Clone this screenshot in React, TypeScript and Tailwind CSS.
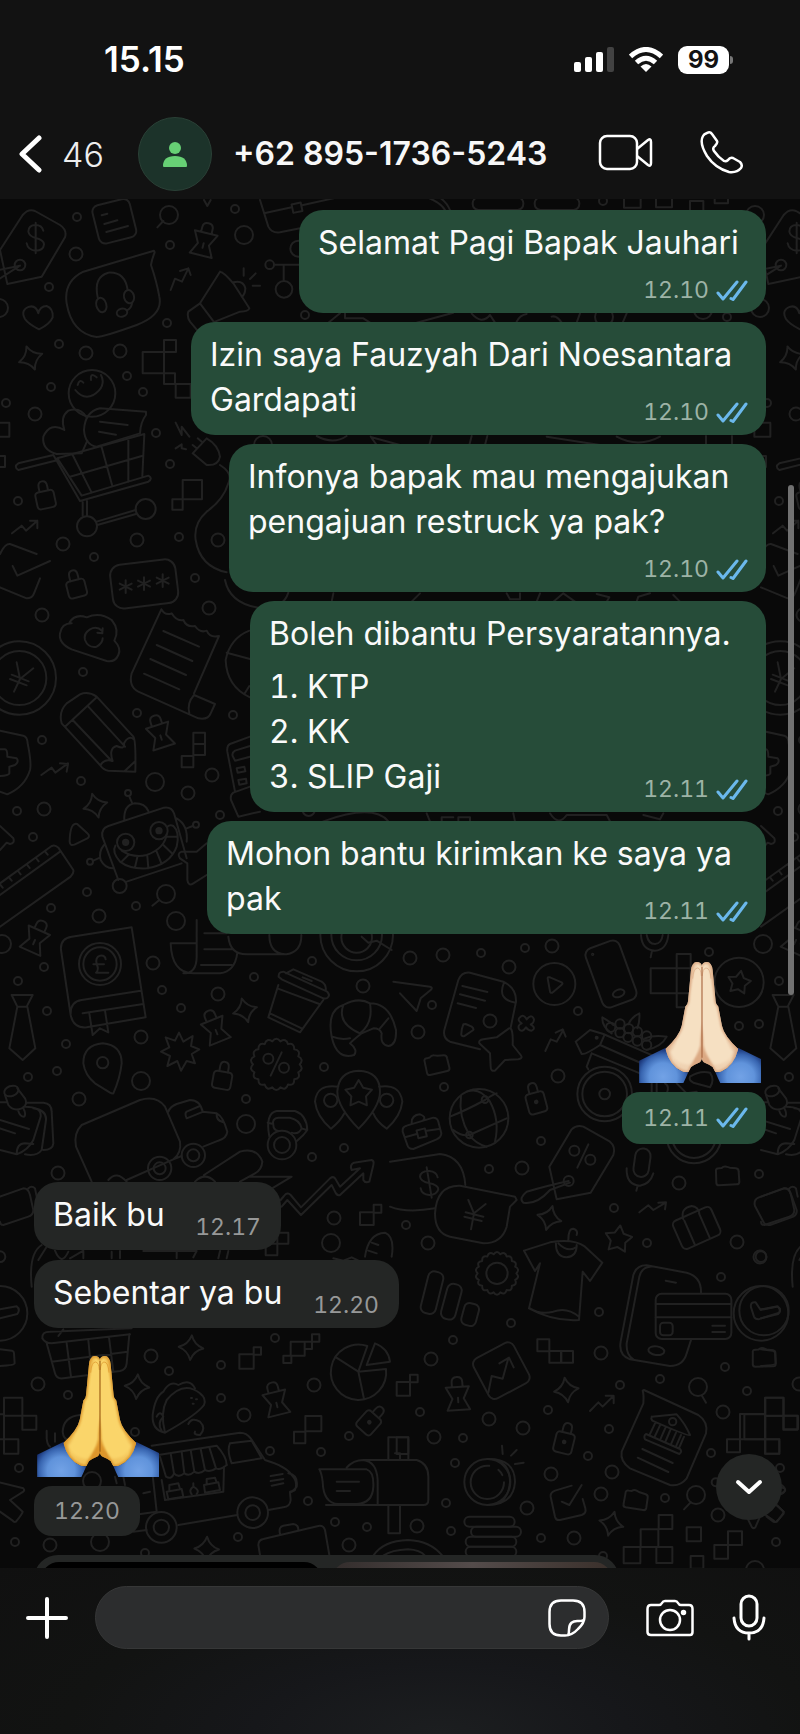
import type { ReactNode } from "react";

type Tone = "out" | "in";

interface BubbleProps {
  tone: Tone;
  time: string;
  width?: string;
  inlineTime?: boolean;
  children: ReactNode;
}

/* ---------- wallpaper ---------- */

const SMALL_DOTS = [
  [77, 217], [49, 287], [59, 344], [51, 387], [127, 376], [143, 392], [6, 403], [156, 433], [170, 464],
  [18, 501], [179, 537], [94, 557], [195, 578], [167, 323], [170, 245], [235, 209], [305, 315], [83, 672],
  [42, 740], [81, 781], [17, 811], [33, 837], [137, 713], [233, 715], [220, 815], [87, 892], [51, 908],
  [136, 906], [44, 967], [312, 961], [254, 977], [18, 981], [162, 990], [181, 1008], [47, 1011], [66, 1044],
  [57, 1071], [28, 1077], [324, 1067], [246, 1099], [312, 1157], [344, 1148], [481, 953], [525, 948],
  [432, 1005], [578, 1011], [444, 1087], [541, 1141], [489, 1169], [406, 1225], [511, 1323], [599, 1312],
  [614, 1208], [647, 1243], [721, 1277], [759, 1174], [709, 952], [739, 1026], [759, 1024], [275, 1338],
  [221, 1365], [169, 1371], [68, 1395], [221, 1398], [135, 1432], [349, 1436], [321, 1452], [270, 1451],
  [308, 1501], [335, 1522], [367, 1527], [238, 1537], [145, 1553], [15, 1542], [19, 1468], [453, 1340],
  [420, 1412], [548, 1410], [463, 1438], [455, 1463], [588, 1456], [609, 1429], [620, 1385], [660, 1379],
  [725, 1367], [747, 1391], [446, 1503], [451, 1531], [541, 1538], [665, 1498], [711, 1453], [603, 1556],
  [603, 201], [727, 317],
];

const MEDIUM_DOTS = [
  [76, 254], [86, 353], [120, 351], [35, 414], [63, 544], [137, 540], [218, 540], [42, 615], [209, 608],
  [188, 793], [212, 775], [44, 809], [99, 916], [153, 963], [218, 994], [141, 1037], [79, 1099], [58, 1173],
  [363, 986], [334, 1218], [410, 958], [443, 955], [509, 967], [552, 946], [418, 1032], [558, 1076],
  [490, 1021], [522, 1168], [428, 1243], [679, 1183], [737, 1242], [760, 1257], [151, 1356], [38, 1384],
  [314, 1385], [244, 1415], [50, 1545], [349, 1545], [431, 1359], [601, 1353], [489, 1419], [523, 1428],
  [434, 1437], [551, 1474], [612, 1472], [601, 1494], [527, 1508], [417, 1526], [574, 1538], [723, 1412],
  [718, 1515],
];

const LARGE_DOTS = [
  [244, 235], [-1, 308], [155, 782], [176, 921], [166, 894], [2, 944], [141, 1081], [246, 1124], [331, 1243],
  [100, 1542], [92, 1481], [169, 215], [755, 215], [263, 445], [755, 1570], [698, 1387], [696, 1495],
  [604, 317], [703, 310],
];

function wavy(cx: number, cy: number, r: number, n: number, depth: number) {
  const pts: string[] = [];
  for (let i = 0; i < n; i++) {
    const a = (i / n) * Math.PI * 2;
    const mid = ((i + 0.5) / n) * Math.PI * 2;
    const end = ((i + 1) / n) * Math.PI * 2;
    if (i === 0) pts.push(`M${cx + r * Math.cos(a)} ${cy + r * Math.sin(a)}`);
    pts.push(
      `Q${cx + (r + depth) * Math.cos(mid)} ${cy + (r + depth) * Math.sin(mid)} ${cx + r * Math.cos(end)} ${cy + r * Math.sin(end)}`
    );
  }
  return pts.join("") + "Z";
}

function star(cx: number, cy: number, r: number, turn = 0) {
  const pts: string[] = [];
  for (let i = 0; i < 10; i++) {
    const a = ((i * 36 - 90 + turn) * Math.PI) / 180;
    const d = i % 2 ? r * 0.55 : r;
    pts.push(`${cx + d * Math.cos(a)} ${cy + d * Math.sin(a)}`);
  }
  return "M" + pts.join("L") + "Z";
}

interface GlyphProps {
  x: number;
  y: number;
  turn?: number;
}

function Pin({ x, y, turn = 0 }: GlyphProps) {
  return (
    <path
      transform={`translate(${x} ${y}) rotate(${turn})`}
      d="M-35 -32H35L17 3L34 37H-34L-17 3ZM-16 -32V-46Q-16 -62 0 -62Q16 -62 16 -46V-32M0 0V14"
    />
  );
}

function Padlock({ x, y, turn = 0, dot = false }: GlyphProps & { dot?: boolean }) {
  return (
    <g transform={`translate(${x} ${y}) rotate(${turn})`}>
      <rect x="-28" y="-22" width="56" height={dot ? 62 : 52} rx="10" />
      <path d="M-13 -22V-36Q-13 -52 0 -52Q13 -52 13 -36V-22" />
      {dot && <circle cy="6" r="4" fill="#212121" />}
    </g>
  );
}

function Sparkle({ x, y, turn = 0 }: GlyphProps) {
  return (
    <path
      transform={`translate(${x} ${y}) rotate(${turn})`}
      d="M0 -37Q9 -9 37 0Q9 9 0 37Q-9 9 -37 0Q-9 -9 0 -37Z"
    />
  );
}

function Folder({ x, y, turn = 0 }: GlyphProps) {
  return (
    <path
      transform={`translate(${x} ${y}) rotate(${turn})`}
      d="M-35 -13Q-37 -23 -27 -23L-18 -24Q-12 -30 -4 -28L6 -25L25 -23Q33 -22 33 -13L35 17Q35 25 27 25L-26 28Q-34 28 -34 20Z"
    />
  );
}

function Asterisk({ x, y }: GlyphProps) {
  return <path transform={`translate(${x} ${y})`} d="M0 -19V19M-18 -9L18 9M-18 9L18 -9" />;
}

function Doodles() {
  return (
    <g id="doodles">
      <g transform="translate(0 -597) scale(3)" strokeWidth="2">
        {SMALL_DOTS.map(([x, y]) => <circle key={`${x}-${y}`} cx={x} cy={y} r="4" />)}
        {MEDIUM_DOTS.map(([x, y]) => <circle key={`${x}-${y}`} cx={x} cy={y} r="6.5" />)}
        {LARGE_DOTS.map(([x, y]) => <circle key={`${x}-${y}`} cx={x} cy={y} r="9" />)}
      </g>

      {/* price tag, headset, shopping cart */}
      <g transform="translate(0 3)">
        <path d="M22 252L0 150L68 45Q85 25 105 33L180 75Q202 90 195 112L125 230ZM-5 210L60 197M0 235L60 197" />
        <circle cx="60" cy="195" r="16" />
        <path d="M130 92Q125 75 107 75Q85 75 85 95Q88 110 107 114Q132 120 132 133Q130 152 107 152Q84 150 80 130M107 68V160" />
        <rect x="285" y="5" width="115" height="118" rx="20" transform="rotate(-14 342 62)" />
        <path d="M305 46L322 41M313 72L352 61M319 96L384 78M490 63L472 82M612 0L622 18L632 0" />
        <Pin x={611} y={130} turn={14} />
        <path d="M462 152Q350 185 250 215Q190 245 200 310Q215 400 290 411Q310 411 410 375Q490 345 478 290Q470 245 453 195Q455 180 464 157Z" />
        <path d="M293 292Q280 230 325 218Q375 215 383 270M396 310Q394 325 380 332" />
        <ellipse cx="304" cy="315" rx="15" ry="22" transform="rotate(-15 304 315)" />
        <ellipse cx="387" cy="290" rx="15" ry="20" transform="rotate(-15 387 290)" />
        <ellipse cx="366" cy="338" rx="16" ry="12" transform="rotate(-15 366 338)" />
        <path d="M115 340Q108 315 88 320Q60 330 75 357Q85 372 117 388Q150 372 158 352Q160 325 140 318Q120 318 115 340" />
        <path d="M512 270L525 236L546 245L565 205M540 213L565 205L572 225" />
        <path d="M660 215L600 310L565 335Q560 350 570 365L595 395M600 310L645 370M660 215Q670 215 700 250L748 325Q745 335 720 335L645 365M700 247Q730 240 736 265Q735 285 725 290M731 205V227M767 220L750 237M758 257H780" />
        <path d="M780 0L805 80Q815 100 840 97L900 85M792 40L875 22M906 16L1000 -5" />
        <rect x="877" y="10" width="28" height="26" transform="rotate(-12 891 23)" />
        <path d="M823 194H900M851 194V240" />
        <circle cx="809" cy="194" r="13" />
        <circle cx="852" cy="268" r="25" />
        <circle cx="895" cy="146" r="24" />
        <Sparkle x={92} y={474} turn={-20} />
        <path d="M428 456H492V420H528V456H492V520H428ZM492 520H525V552H492ZM527 552H572V593H527Z" />
        <circle cx="276" cy="580" r="70" />
        <path d="M226 570Q250 600 280 585Q320 560 303 525M233 555Q238 535 250 548M273 540Q270 515 290 532" />
        <path d="M193 690Q150 665 130 710Q125 750 170 762L245 760L262 722M193 690Q180 650 205 632Q240 620 258 650" />
        <path d="M438 635L300 625Q255 635 252 690Q255 735 290 740L420 700Q422 665 438 645ZM300 665L383 675M297 695L348 704" />
        <path d="M160 765L55 790Q40 800 55 810L165 782M160 765L240 903L445 845Q460 835 445 827L245 887L172 775L433 702L427 828M218 765L275 878M305 742L337 858M385 715V845M210 830L428 767M248 905V947M261 903V947M290 965L407 930M292 975L408 942" />
        <circle cx="261" cy="979" r="30" />
        <circle cx="437" cy="927" r="30" />
        <Padlock x={136} y={895} turn={-12} />
        <Padlock x={229} y={1162} turn={-14} />
        <path d="M578 760L620 715Q655 735 660 770Q655 798 620 795ZM590 745L578 735M607 727L593 715M660 795Q700 820 685 850Q670 900 620 935Q580 970 587 1020Q600 1100 680 1117M527 668L545 705V680L568 710M527 745L545 733V745L558 748" />
        <path d="M548 840H606V898H548ZM517 898H548V929H517Z" />
        <path d="M36 1000L65 977L78 992L112 962M90 962H112V985" />
        <path d="M110 1062L30 1032Q15 1030 0 1062M38 1098L52 1127L150 1083M0 1162L80 1195Q97 1195 102 1180L120 1135" />
        <rect x="334" y="1086" width="197" height="132" rx="32" transform="rotate(-7 432 1152)" />
        <Asterisk x={377} y={1160} />
        <Asterisk x={432} y={1151} />
        <Asterisk x={488} y={1142} />
        <path d="M-20 668H28V710H-20ZM-18 768H15V801H-18Z" />
        <path d="M985 368L1020 340M1035 340V355H1090L1110 368M950 708Q1000 735 1040 708M1112 710L1130 735M1115 712L1200 735" />
      </g>

      {/* slices of drawings that show between the sent bubbles */}
      <g transform="translate(1200 3)">
        <rect x="218" y="-8" width="152" height="38" rx="18" />
        <rect x="404" y="-8" width="134" height="38" rx="18" />
        <path d="M672 -15H722V23H672ZM768 -15H816V22H768ZM870 3H910V40H870ZM944 -25H984V10H944ZM75 -10Q120 5 135 30M115 -10Q140 5 150 30" />
        <path d="M50 368L160 338M215 341Q245 375 270 345L285 368M350 365Q360 345 380 342M455 350Q470 345 485 368M540 340L530 368M680 340L668 368" />
        <path d="M95 708L88 735M215 708L208 735M262 708L255 735M440 710L600 735M650 710Q715 745 780 710M918 708V735M996 708V735" />
      </g>

      {/* cloud, coin, receipt, pencil, robot */}
      <g transform="translate(0 1143)">
        <path d="M208 128Q225 100 260 112Q300 95 335 120Q360 150 343 182Q365 205 355 225Q345 248 320 243L215 208Q175 190 180 160Q185 130 215 130M307 153Q290 137 270 148Q250 160 255 180Q265 205 290 200Q308 190 308 175M308 145L307 160L292 158" />
        <circle cx="58" cy="294" r="110" />
        <circle cx="58" cy="294" r="81" />
        <path d="M50 247L60 297L100 265M60 297L42 335M30 297L80 316M35 284L86 304" />
        <path d="M484 88L395 280Q385 320 415 335L595 415Q625 420 632 400L645 372L582 345Q560 370 568 400M484 88Q495 108 515 100Q530 125 550 120Q560 143 585 138Q600 160 620 152Q630 175 657 168L582 340M490 153L597 200M470 195L577 243M451 237L558 285M432 281L538 328" />
        <path d="M185 430Q175 395 200 370L240 343Q265 333 290 350L400 470Q408 480 406 575L325 572Q310 570 300 555ZM195 440L290 352M218 420L335 543M265 380L375 500M303 553Q315 535 338 543Q325 505 350 498Q375 510 372 490Q385 465 402 478M375 572L404 545" />
        <Pin x={481} y={466} turn={-18} />
        <path d="M580 458H615V525H580ZM580 492H615M545 528H580V562H545Z" />
        <path d="M0 452L70 467Q82 470 83 490Q95 550 90 570Q75 620 22 643L0 635M-20 508H15Q22 508 22 530L50 535Q58 545 45 555L28 560V580Q25 588 -10 588" />
        <path d="M124 585L155 563L166 578L204 550M180 550L204 552L200 575" />
        <Sparkle x={286} y={677} turn={-15} />
        <path d="M355 900L307 770Q303 745 325 738L492 683Q515 680 522 700L560 835M380 905L545 850M373 722Q370 675 405 670Q435 670 445 693M396 668L388 650M312 795Q295 815 302 840Q315 865 338 865M300 833L280 842M530 715Q565 735 560 785M560 745L578 738" />
        <circle cx="359" cy="918" r="21" />
        <circle cx="384" cy="639" r="9" />
        <circle cx="270" cy="845" r="9" />
        <circle cx="588" cy="734" r="9" />
        <circle cx="377" cy="787" r="26" />
        <circle cx="477" cy="752" r="26" />
        <circle cx="377" cy="787" r="8" fill="#212121" />
        <circle cx="477" cy="752" r="8" fill="#212121" />
        <path d="M346 797Q335 815 360 845Q390 868 440 865Q510 855 530 800Q540 755 520 738Q510 733 502 740M365 812Q400 835 440 825Q495 805 500 762M385 825L365 845M412 832L405 862M442 828L445 865M470 815L485 852M490 795L518 822M500 770H532" />
        <path d="M620 790L590 815L545 815Q530 820 540 835L562 850V900Q565 920 580 910L620 885" />
        <path d="M225 732Q210 735 209 785Q210 800 225 793L262 775Q272 768 262 760L235 735Q230 730 225 732" />
        <path d="M0 738L40 775Q45 790 30 792L20 788L0 810" />
        <path d="M0 910L155 798Q165 793 175 803L220 870Q222 880 212 890L0 1040M0 945L180 815M0 913l8 10M27 892l8 10M54 873l8 10M81 854l8 10M108 834l8 10M135 814l8 10" />
        <Pin x={105} y={1080} turn={24} />
        <path d="M478 960L457 977" />
        <path d="M750 470L690 492Q680 497 682 515L705 635M750 620L700 638Q690 645 693 660L715 710L780 695M750 498L705 512Q695 518 698 528L705 542L750 530M710 565L733 560L736 574L713 578ZM715 600L738 596L740 610L718 614Z" />
        <path d="M748 152Q690 175 677 240Q680 320 750 352M680 218L750 237M748 318L733 342M675 0Q690 75 790 85Q850 85 865 38M970 724Q1120 670 1165 724M1000 40L995 65" />
        <circle cx="926" cy="690" r="18" />
        <path d="M1280 700L1290 724M1325 724V712H1360M1375 724V712H1410V724M1540 700L1545 724M1650 700Q1675 740 1700 705H1820L1830 724M1930 705L1980 718L1990 700M1235 65L1260 40M1520 40L1530 58H1560V40M1610 65L1620 40M1660 65L1690 40L1725 65M1790 42L1828 52L1820 65M1910 65L1915 50L1950 40M2020 45L2040 65" />
      </g>

      {/* book, tie, truck, kettlebell, map pins */}
      <g transform="translate(0 2163)">
        <path d="M590 0V110Q590 160 550 160M512 70H586M512 70Q515 160 580 160H660Q705 155 712 98M613 40H680M613 88H700M603 135H695M685 50Q690 103 740 103H860Q905 95 904 45M808 45Q808 100 855 103" />
        <circle cx="1070" cy="45" r="109" />
        <circle cx="1070" cy="45" r="76" />
        <circle cx="1070" cy="52" r="46" />
        <path d="M1085 50L1105 68L1130 62L1175 90" />
        <path d="M395 22L215 50Q180 55 183 90L212 285Q220 325 260 322L437 292ZM212 285Q210 245 245 240L422 212M248 280L430 252M268 280L278 345L300 325L325 337L315 272" />
        <circle cx="300" cy="132" r="63" />
        <circle cx="300" cy="132" r="50" />
        <path d="M317 118Q315 105 300 107Q285 112 290 132Q298 150 288 158H325M280 133H312" />
        <path d="M35 225H98L80 260H52ZM52 260L28 385L68 420L106 385L82 260" />
        <path d="M340 520Q360 475 365 430Q365 375 308 370Q250 375 250 430Q255 465 285 490L330 518Q337 522 340 520" />
        <circle cx="308" cy="428" r="17" />
        <path d="M537 338L550 365L578 348L573 378L598 388L575 402L585 430L560 423L543 452L532 423L502 438L510 408L483 395L508 382L497 352L525 362Z" />
        <Padlock x={667} y={477} turn={10} />
        <Pin x={647} y={330} turn={-22} />
        <Sparkle x={735} y={271} turn={-15} />
        <path d="M850 155Q835 155 836 170L845 178L970 235Q985 238 987 225Q985 215 975 212ZM858 160L880 148L965 185Q980 195 977 212M908 172L935 183M835 195L805 292L900 337L970 240M832 205L958 252M810 280L905 325" />
        <path d={wavy(829, 433, 70, 18, 15)} />
        <circle cx="805" cy="416" r="15" />
        <circle cx="852" cy="443" r="15" />
        <path d="M845 397L812 467" />
        <path d="M995 350Q980 270 1030 255Q1075 230 1110 250Q1170 250 1188 330Q1190 375 1165 378Q1140 375 1145 340Q1140 325 1120 325L1085 340Q1060 360 1050 370Q1075 390 1062 405Q1010 420 995 350M1030 255Q1010 310 1080 340Q1120 310 1110 250M1165 295L1140 325M997 350Q1020 360 1050 355" />
        <path d="M1076 626Q1012 560 1012 515Q1015 455 1076 452Q1140 455 1140 515Q1140 560 1076 626M1015 500Q950 490 945 545Q950 590 993 626Q1020 605 1033 580M1137 500Q1200 490 1207 545Q1202 590 1160 626Q1130 605 1120 580" />
        <path d={star(1076, 522, 42)} />
        <circle cx="992" cy="541" r="20" />
        <circle cx="1160" cy="541" r="20" />
        <path d="M80 548H130Q155 550 155 575L160 670Q158 690 130 690M75 560Q125 560 122 590L100 660Q85 690 50 703L0 690M50 703Q50 670 75 670L100 672M0 600L87 627M0 625L45 640M15 525L25 555Q40 575 65 565Q85 555 75 535L52 505M55 573Q60 590 72 590M70 565Q78 580 74 588M0 547H20M100 565Q140 570 138 600L125 690Q110 710 75 703" />
        <ellipse cx="34" cy="513" rx="22" ry="15" transform="rotate(-20 34 513)" />
        <path d="M275 785L228 680Q220 640 245 615L420 540Q470 525 495 560L540 665Q545 700 520 718L380 780M505 575Q510 560 530 552L570 540Q600 540 608 575L650 580Q670 590 682 635Q680 655 655 662L610 680M600 558L560 575Q553 580 560 595L610 575M650 582Q648 600 668 606M520 718L545 708M325 780Q350 750 380 785" />
        <circle cx="580" cy="706" r="35" />
        <circle cx="580" cy="706" r="18" />
        <circle cx="479" cy="745" r="35" />
        <circle cx="479" cy="745" r="18" />
        <path d="M612 765L720 695Q770 680 787 725Q785 750 765 760L720 785M585 785Q615 755 645 785M750 770H875L800 815" />
        <circle cx="846" cy="675" r="43" />
        <circle cx="846" cy="675" r="24" />
        <path d="M808 650Q795 580 830 573H885Q920 585 922 630L910 645L888 665M820 615Q815 595 835 593H870Q900 600 905 625Q895 645 875 638M820 615Q820 630 835 633M803 608L820 612M905 625L920 630" />
        <path d="M845 860L862 840L903 885L995 795L1005 815Q1010 828 1020 825L1090 760V780Q1095 790 1108 785L1120 735Q1123 722 1115 720L1062 728Q1048 735 1055 750L1080 745L1020 800L1005 775Q1000 768 990 775L903 862L872 825Q862 815 852 828L842 840" />
        <path d="M1080 877H1121V915H1080ZM1121 854H1144V878H1121ZM832 938H865V971H832ZM797 971H832V1006H797Z" />
        <path d="M0 830L70 805Q85 805 90 825L100 870Q100 885 85 890L10 915Q0 915 0 905M85 805Q95 795 105 805L110 830" />
        <path d="M1095 1010Q1105 940 1155 938Q1185 950 1175 1010M1115 968L1135 975M1105 992L1130 1000M1000 1015L1030 1022L1055 1012L1080 1024M95 1100Q85 1000 125 975M115 1020L140 980M165 992Q185 1040 205 995M210 1015L250 992V1015M335 995V1015M360 993V1015M430 993H590L580 1012M530 993V1015M660 993L655 1015M685 993L680 1015" />
        <circle cx="0" cy="1180" r="82" />
        <circle cx="0" cy="1010" r="16" />
        <path d="M0 1168L50 1159Q62 1168 52 1182L0 1195" />
      </g>

      {/* globe, tags, t-shirt, card */}
      <g transform="translate(1200 2193)">
        <path d="M-20 155L90 170Q100 172 92 180L62 205L50 243L0 190" />
        <path d="M240 358L150 335Q128 325 133 300L175 150Q185 125 210 128L310 155Q350 175 348 215L332 293M312 158Q290 210 348 218M187 168L262 186M180 193L255 212M173 220L228 234M190 283Q183 300 184 315Q188 322 195 317L220 300Q222 295 215 290L197 282Z" />
        <path d="M327 295Q340 290 338 345L362 375Q370 385 355 388L315 390L285 422Q272 425 272 410L270 370L238 340Q235 330 250 328L290 322Z" />
        <circle cx="463" cy="162" r="63" />
        <path d="M443 145Q443 140 450 142L485 157Q490 160 485 164L457 188Q450 190 450 184Z" />
        <rect x="579" y="38" width="108" height="188" rx="22" transform="rotate(-20 633 132)" />
        <ellipse cx="656" cy="190" rx="18" ry="11" transform="rotate(-20 656 190)" />
        <circle cx="578" cy="73" r="2" />
        <path d="M723 15Q725 60 765 62Q800 60 805 15M740 15Q745 42 765 42Q785 40 788 15M756 62L752 82" />
        <path d="M752 115H872V190H752ZM830 72H872V232H830Z" />
        <circle cx="1017" cy="157" r="74" />
        <path d={star(1017, 158, 36, 10)} />
        <path d="M360 262Q370 250 380 268Q395 250 402 268Q402 280 392 283Q410 295 395 302Q385 302 378 292Q365 310 357 297Q352 285 365 280Q350 270 360 262" />
        <path d="M436 363L452 328L470 335L490 300M467 308L488 298L497 320" />
        <Folder x={111} y={403} turn={-10} />
        <path d="M635 310Q605 290 607 262Q630 275 640 285M685 283Q695 260 718 250Q720 275 712 295M800 320Q760 315 735 325M800 320Q785 350 740 360" />
        {[[632, 292], [660, 282], [686, 296], [660, 308], [684, 322], [712, 305], [740, 318], [712, 333], [740, 345]].map(
          ([x, y]) => <circle key={`${x}-${y}`} cx={x} cy={y} r="14" />
        )}
        <path d="M527 335L570 300L610 312L800 395M527 335L545 372Q555 375 600 345L612 318M600 345L770 420M575 370L560 410L565 418M575 370L720 430M755 460V490M770 460V490M795 460Q810 470 800 490M830 460L860 490L890 485" />
        <circle cx="590" cy="323" r="3" />
        <circle cx="614" cy="492" r="82" />
        <circle cx="614" cy="492" r="67" />
        <circle cx="614" cy="492" r="16" />
        <Padlock x={407} y={510} turn={-15} dot />
        <circle cx="237" cy="565" r="88" />
        <path d="M183 497Q175 560 208 615Q225 640 260 650M200 485Q240 470 270 515Q300 570 285 635M150 560Q200 540 255 510Q275 495 290 490M160 600Q185 620 208 615L320 565" />
        <circle cx="255" cy="509" r="10" />
        <circle cx="208" cy="615" r="10" />
        <path d="M8 605Q6 590 20 587L100 563Q112 563 115 575L124 610Q124 622 110 628L40 657Q25 657 22 645ZM35 578Q35 555 60 553Q80 560 70 570M15 622L50 612M80 602L117 597" />
        <rect x="52" y="598" width="26" height="24" transform="rotate(-14 65 610)" />
        <path d="M-30 695L120 672Q190 680 196 765M-30 830Q20 850 105 835M113 742Q110 725 88 723Q62 722 60 740Q62 755 87 759Q115 765 115 778Q110 795 88 795Q65 793 62 775M80 712L95 803" />
        <path d="M345 800L180 767Q110 765 105 850Q105 910 150 920L250 940Q305 940 320 890L330 830L350 810ZM205 810L222 850L257 822M222 850L213 898M193 860L245 873M197 847L250 860" />
        <path d="M470 808L448 710L515 598Q530 583 550 590L630 635Q648 650 640 675L572 788ZM565 643L532 713M506 753Q450 765 380 785Q355 805 370 818Q410 825 450 780L510 758" />
        <circle cx="523" cy="662" r="15" />
        <circle cx="571" cy="689" r="15" />
        <circle cx="506" cy="753" r="15" />
        <Sparkle x={448} y={864} turn={15} />
        <rect x="703" y="655" width="46" height="86" rx="23" transform="rotate(8 726 698)" />
        <path d="M680 715Q678 765 720 767Q750 762 760 730M713 767L709 782" />
        <circle cx="882" cy="618" r="82" />
        <circle cx="882" cy="618" r="66" />
        <Folder x={983} y={738} />
        <path d="M870 440Q900 420 930 428Q945 450 930 472L880 458Q865 450 870 440" />
        <rect x="828" y="848" width="125" height="92" rx="14" transform="rotate(-24 890 895)" />
        <path d="M853 872L885 945M897 850L930 925M850 868Q840 835 875 828Q895 830 898 850" />
        <path d={star(655, 928, 42, 8)} />
        <path d="M718 847L745 826L760 840L797 818M775 818L798 817L795 838" />
        <path d="M372 962L450 937Q520 925 555 950L607 998L570 1053L548 1025L537 1170Q460 1175 387 1135L420 1000L405 1023ZM468 935Q465 980 500 982Q530 980 530 945M505 930Q505 895 520 896Q535 900 530 915M475 940Q505 970 530 950M390 1135Q420 1155 460 1145Q500 1130 537 1160" />
        <path d={wavy(291, 1030, 58, 18, 13)} />
        <circle cx="291" cy="1030" r="32" />
        <rect x="73" y="1024" width="46" height="128" rx="18" transform="rotate(14 96 1088)" />
        <rect x="132" y="1061" width="44" height="108" rx="18" transform="rotate(15 154 1115)" />
        <rect x="188" y="1120" width="45" height="67" rx="16" transform="rotate(15 210 1153)" />
        <path d="M903 1090Q905 1040 860 1028L740 1006Q710 1005 700 1035L662 1235Q655 1275 690 1288L810 1308Q850 1308 860 1270L873 1230M750 1010Q725 1012 718 1040L680 1240Q678 1275 700 1288M797 1052L828 1058" />
        <rect x="767" y="1091" width="227" height="136" rx="18" />
        <path d="M767 1122H994M767 1162H994M937 1187H975M937 1206H975" />
        <rect x="780" y="1178" width="38" height="38" rx="10" />
        <ellipse cx="769" cy="1262" rx="24" ry="13" transform="rotate(8 769 1262)" />
        <circle cx="1092" cy="1142" r="74" />
        <path d="M1053 1132Q1050 1115 1067 1117L1082 1140L1130 1130Q1145 1135 1138 1148L1075 1168Q1065 1168 1062 1160Z" />
        <path d="M1065 828Q1060 810 1075 803L1150 775Q1165 773 1170 785L1190 840Q1192 852 1180 860L1110 885Q1095 887 1090 875Z" />
      </g>

      {/* basket, taco, food truck, mailbox */}
      <g transform="translate(0 3303)">
        <path d="M127 115Q125 95 150 95L395 85M127 115Q135 130 155 130L390 103M140 130L165 220Q170 238 190 235L360 213Q378 210 380 190L388 103M200 130L213 230M265 120L275 225M327 112L340 215M155 185L383 155M175 108L190 88" />
        <path d="M0 148L36 152Q42 154 42 160L44 190Q44 196 0 198" />
        <Sparkle x={573} y={143} turn={4} />
        <Sparkle x={411} y={260} turn={4} />
        <Sparkle x={620} y={747} turn={2} />
        <path d="M718 163H761V206H718ZM761 142H783V164H761ZM872 125H914V167H872ZM850 167H874V189H850ZM914 125H936V147H914ZM936 103H958V125H936Z" />
        <path d="M1102 138A83 83 0 1 0 1158 207L1075 215ZM1075 215L1008 172M1075 215L1092 297M1125 130L1100 195L1170 185Q1165 145 1125 130" />
        <Pin x={829} y={308} turn={-14} />
        <path d="M495 398Q480 340 500 300Q550 240 600 280Q620 295 612 315Q590 345 495 398Q455 390 458 345Q465 290 490 275Q510 240 535 255Q570 235 585 265M470 350Q480 330 490 350Q470 370 485 392" />
        <path d="M573 294h3M588 298h3M578 311h3" />
        <path d="M565 372Q575 350 600 365Q620 385 600 405Q580 405 585 395" />
        <path d="M455 437L720 398Q740 398 752 415L795 480Q860 500 875 525Q895 545 885 570L870 578L872 600Q870 620 850 622L805 630M712 645L535 675M440 690L400 695M475 465L650 437Q680 470 680 495M485 540L495 600L670 575L672 500M455 500L470 635M400 645L470 635M812 528L848 522M812 543L850 537M815 557L850 550M865 520Q895 525 890 560Q880 575 870 575" />
        <path d="M480 470L498 530Q515 540 522 520L512 460M522 520Q535 535 553 520L545 455M553 520Q568 530 583 515L572 450M583 515Q598 525 615 510L602 447M615 510Q630 518 648 505L628 442M648 505Q660 512 680 495" />
        <path d="M690 430L755 422L785 475L695 490Q680 450 690 430M500 575L545 567L550 590L505 598ZM508 572V555L535 550L540 567M612 555L655 547L660 570L615 578ZM620 552V537L645 533L650 548M575 583Q565 570 580 560V550M580 560Q600 570 590 582" />
        <circle cx="484" cy="682" r="46" />
        <circle cx="484" cy="682" r="23" />
        <circle cx="758" cy="638" r="46" />
        <circle cx="758" cy="638" r="22" />
        <path d="M780 765L775 735Q775 720 790 717L955 678Q970 675 975 690L988 765M840 702Q835 680 850 677L880 672Q895 673 895 690" />
        <path d="M958 508H1100Q1122 515 1120 560Q1118 610 1070 612H1015Q970 610 968 545Q965 520 958 508M1010 545H1077M1010 573H1050M1040 503Q1060 480 1090 480Q1130 485 1133 540V612M978 615H1200M1165 615V700H1200V615M1090 480H1200" />
        <path d="M12 293H67V347H12ZM67 347H109V389H67ZM12 418H55V461H12ZM-50 343H12V418H-50ZM916 348H964V394H916ZM882 395H916V430H882ZM1165 412H1225V480H1165ZM1190 246H1230V287H1190ZM1185 460H1200V480" />
        <Padlock x={1112} y={362} turn={42} dot />
        <path d="M-10 545L70 565Q75 570 70 575L30 600L68 635Q68 640 48 665Q42 668 38 662L0 635" />
        <path d="M140 392V415Q142 435 150 440M165 400V425M240 345Q190 350 188 395Q190 420 210 422M345 530L350 550M370 530L375 555M430 580L450 575" />
        <path d="M1120 767Q1150 722 1224 720Q1290 722 1327 767M1150 767Q1175 750 1224 748Q1260 750 1275 767" />
      </g>

      {/* chart card, coins, bank note, pixel blocks */}
      <g transform="translate(1200 3303)">
        <path d="M0 480H50Q85 490 85 530V600Q85 615 70 615H0" />
        <rect x="236" y="144" width="136" height="136" rx="20" transform="rotate(-28 304 212)" />
        <path d="M265 278L275 228L308 236L325 175M298 190L327 173L341 202" />
        <Pin x={174} y={293} turn={-4} />
        <path d="M412 118H448V154H412ZM448 153H483V188H448ZM484 153H519V188H484ZM30 224H53V247H30ZM-10 412H25V462H-10Z" />
        <Sparkle x={499} y={270} turn={-8} />
        <Sparkle x={634} y={671} turn={15} />
        <path d="M570 333L595 307L608 320L640 288M617 287H641V310" />
        <Padlock x={494} y={420} turn={14} dot />
        <circle cx="262" cy="546" r="69" />
        <circle cx="262" cy="547" r="50" strokeDasharray="240 30 20 24" />
        <path d="M262 477Q345 475 345 546Q340 615 262 615M290 480Q330 495 330 546Q325 600 290 612M308 462L306 437M333 467L350 450M345 492L371 488" />
        <rect x="193" y="650" width="151" height="30" rx="15" />
        <rect x="213" y="680" width="150" height="30" rx="15" />
        <rect x="197" y="710" width="152" height="30" rx="15" />
        <rect x="197" y="740" width="152" height="30" rx="15" />
        <path d="M545 555L508 615L485 605M515 557L465 572Q450 578 452 590L465 650Q468 662 480 660L545 645Q560 640 556 625L548 597" />
        <Folder x={708} y={600} turn={12} />
        <path d="M732 270L895 345Q925 365 918 400L860 535Q840 560 810 555L690 505Q660 485 665 455L730 310Q732 285 728 272ZM755 350L830 343Q855 370 870 405Q865 410 757 362Q752 355 755 350M738 402L840 447Q848 455 838 462L735 418Q730 408 738 402M727 447L818 489M713 473L805 516M765 370L750 402M780 376L765 408M796 384L782 416M811 390L797 423M828 398L814 430M843 405L829 437M852 410L838 442" />
        <circle cx="818" cy="365" r="11" />
        <path d="M905 286L918 308M872 607L852 628" />
        <Folder x={1093} y={173} turn={2} />
        <path d="M1020 342H1096V418H1020ZM1096 293H1151V348H1096ZM1151 347H1194V388H1151ZM981 418H1020V457H981ZM1096 418H1138V461H1096Z" />
        <path d="M776 645H817V687H776ZM722 688H775V741H722ZM671 741H721V790H671ZM769 741H817V789H769ZM860 682H903V724H860ZM984 694H1026V735H984ZM943 735H984V776H943ZM872 768H910V806H872Z" />
        <path d="M1040 650L1056 682Q1061 687 1066 682L1080 650M1100 650L1120 665Q1125 668 1130 664L1150 642Q1153 637 1148 632L1130 615M1145 555Q1165 570 1145 582" />
        <circle cx="947" cy="547" r="12" />
      </g>
    </g>
  );
}

function Wallpaper() {
  return (
    <svg
      className="absolute inset-0 h-full w-full"
      viewBox="0 0 2400 4107"
      preserveAspectRatio="xMinYMin slice"
      fill="none"
      stroke="#212121"
      strokeWidth="6"
      strokeLinejoin="round"
      strokeLinecap="round"
      aria-hidden="true"
    >
      <Doodles />
      <use href="#doodles" x="2283" />
    </svg>
  );
}

/* ---------- icons ---------- */

function Ticks() {
  return (
    <svg className="h-[22px] w-8" viewBox="0 0 32 22" fill="none" stroke="#6bb8ec" strokeWidth="3" strokeLinecap="round" strokeLinejoin="round" aria-hidden="true">
      <path d="M2 13L7 19L21 2M15 18.500L17 19.500L30 2" />
    </svg>
  );
}

function PrayingHands({ id, skin, shade, line, label }: { id: string; skin: string; shade: string; line: string; label: string }) {
  return (
    <svg className="h-[121px] w-[122px]" viewBox="0 0 366 364" role="img" aria-label={label}>
      <defs>
        <linearGradient id={`${id}-left`} gradientUnits="userSpaceOnUse" x1="95" y1="190" x2="189" y2="215">
          <stop offset="0" stopColor={shade} />
          <stop offset="0.35" stopColor={skin} />
          <stop offset="0.88" stopColor={skin} />
          <stop offset="1" stopColor={shade} />
        </linearGradient>
        <linearGradient id={`${id}-low`} x1="0" y1="0" x2="0" y2="1">
          <stop offset="0.75" stopColor={shade} stopOpacity="0" />
          <stop offset="1" stopColor={shade} stopOpacity="0.35" />
        </linearGradient>
        <radialGradient id={`${id}-sleeve`} gradientUnits="userSpaceOnUse" cx="72" cy="345" r="92">
          <stop offset="0" stopColor="#72a2e6" />
          <stop offset="0.45" stopColor="#6093db" />
          <stop offset="0.72" stopColor="#3865b0" />
          <stop offset="1" stopColor="#0a1d5c" />
        </radialGradient>
        <filter id={`${id}-soft`} x="-50%" y="-10%" width="200%" height="120%">
          <feGaussianBlur stdDeviation="4" />
        </filter>
        <clipPath id={`${id}-clip`}>
          <path d="M189 12Q186 0 173 0Q159 1 156 24L147 118Q147 126 139 134Q136 150 128 192Q122 222 79 262Q92 312 128 328Q138 333 148 331L156 316Q166 308 178 304Q188 299 189 287Z" />
        </clipPath>
        <g id={`${id}-half`}>
          <path d="M0 297L80 258Q92 312 128 328Q138 333 148 331Q140 350 133 364H0Z" fill={`url(#${id}-sleeve)`} />
          <g clipPath={`url(#${id}-clip)`}>
            <rect x="70" width="120" height="340" fill={`url(#${id}-left)`} />
            <rect x="70" width="120" height="340" fill={`url(#${id}-low)`} />
            <path d="M166 45Q168 19 179 20Q187 22 187 42L184 250Q176 285 150 308Q110 308 94 270Q145 220 155 140Z" fill={skin} filter={`url(#${id}-soft)`} />
            <path
              d="M189 12Q186 0 173 0Q159 1 156 24L147 118Q147 126 139 134Q136 150 128 192Q122 222 79 262Q92 312 128 328Q138 333 148 331L156 316Q166 308 178 304Q188 299 189 287"
              fill="none"
              stroke={shade}
              strokeWidth="8"
              filter={`url(#${id}-soft)`}
            />
            <path d="M161 50Q163 18 176 18Q186 20 187 42" fill="none" stroke={shade} strokeWidth="3" opacity="0.7" />
          </g>
        </g>
      </defs>
      <use href={`#${id}-half`} />
      <g transform="translate(377 0) scale(-1 1)">
        <use href={`#${id}-half`} />
      </g>
      <path d="M189 14V288" stroke={line} strokeWidth="4" opacity="0.85" />
    </svg>
  );
}

function SignalIcon() {
  return (
    <svg className="h-[25px] w-10" viewBox="0 0 40 25" fill="#fff" aria-hidden="true">
      <rect y="15" width="7" height="10" rx="2" />
      <rect x="11" y="10" width="7" height="15" rx="2" />
      <rect x="22" y="5" width="7" height="20" rx="2" />
      <rect x="33" width="7" height="25" rx="2" fill="#424242" />
    </svg>
  );
}

function WifiIcon() {
  return (
    <svg className="h-[25px] w-[34px]" viewBox="0 0 34 25" aria-hidden="true">
      <path d="M17 25L11.500 19.500Q17 14.500 22.500 19.500Z" fill="#fff" />
      <path d="M7.500 15.500Q17 7 26.500 15.500" fill="none" stroke="#fff" strokeWidth="5" />
      <path d="M1.500 9.500Q17 -4.500 32.500 9.500" fill="none" stroke="#fff" strokeWidth="5" />
    </svg>
  );
}

/* ---------- chat ---------- */

function Meta({ tone, time }: { tone: Tone; time: string }) {
  return (
    <span className={`flex items-center gap-[7px] text-[23px] leading-[35px] tabular-nums ${tone === "out" ? "text-[#9db3a6]" : "text-[#979898]"}`}>
      <time>{time}</time>
      {tone === "out" && <Ticks />}
    </span>
  );
}

function Bubble({ tone, time, width = "", inlineTime = false, children }: BubbleProps) {
  if (tone === "in") {
    return (
      <div className={`flex max-w-full items-end justify-between self-start rounded-[24px] bg-[#242625] pt-[10px] pr-5 pb-[5px] pl-[19px] ${width}`}>
        <div className="pb-2 whitespace-nowrap">{children}</div>
        <Meta tone={tone} time={time} />
      </div>
    );
  }
  return (
    <div className={`flex max-w-full flex-col self-end rounded-[24px] bg-[#264c39] pt-[10px] pr-[18px] pb-[5px] pl-[19px] ${width}`}>
      <div className="whitespace-nowrap">{children}</div>
      <div className={inlineTime ? "-mt-[27px] self-end" : "mt-2 self-end"}>
        <Meta tone={tone} time={time} />
      </div>
    </div>
  );
}

function StatusBar() {
  return (
    <div className="flex h-[115px] items-center justify-between pt-1 pr-[67px] pl-[104px]">
      <time className="text-[35px] font-semibold">15.15</time>
      <div className="flex items-center gap-[15px]">
        <SignalIcon />
        <WifiIcon />
        <div className="flex items-center gap-px">
          <span className="flex h-7 w-[51px] items-center justify-center rounded-[9px] bg-white text-2xl font-bold text-[#121212]">99</span>
          <span className="h-2 w-[3px] rounded-r-full bg-[#777]" />
        </div>
      </div>
    </div>
  );
}

function ChatHeader() {
  return (
    <div className="flex h-[78px] items-center pr-[56px] pl-[18px]">
      <button type="button" className="flex w-[120px] items-center gap-5 text-[34px] font-light text-[#eee]" aria-label="Back, 46 unread">
        <svg className="h-10 w-6" viewBox="0 0 24 40" fill="none" stroke="#fff" strokeWidth="5" strokeLinecap="round" strokeLinejoin="round">
          <path d="M21 4L4 20L21 36" />
        </svg>
        46
      </button>
      <div className="flex size-[74px] items-center justify-center rounded-full border border-[#2a4036] bg-[#1c332a]">
        <svg className="size-7" viewBox="0 0 28 28" fill="#67d075" aria-hidden="true">
          <circle cx="14" cy="8" r="6" />
          <path d="M2 26Q2 16 14 16Q26 16 26 26Q26 27 25 27H3Q2 27 2 26Z" />
        </svg>
      </div>
      <h1 className="ml-[21px] flex-1 text-[32px] font-semibold whitespace-nowrap text-[#f7f7f7]">+62 895-1736-5243</h1>
      <div className="flex items-center gap-[47px] pb-1">
        <button type="button" aria-label="Video call">
          <svg className="h-[37px] w-[55px]" viewBox="0 0 55 37" fill="none" stroke="#fff" strokeWidth="2.500" strokeLinejoin="round">
            <rect x="2" y="2" width="37" height="33" rx="7" />
            <path d="M39 15L50 6Q53 4 53 8V29Q53 33 50 31L39 22" />
          </svg>
        </button>
        <button type="button" aria-label="Voice call">
          <svg className="size-11" viewBox="0 0 44 44" fill="none" stroke="#fff" strokeWidth="2.500" strokeLinejoin="round">
            <path d="M7 3Q10 1 12 4L17 11Q18 13 15 16Q12 18 14 21Q18 27 24 31Q26 32 28 30Q30 27 33 28L40 32Q43 35 41 38Q37 43 29 42Q15 38 7 26Q-1 13 3 6Q4 4 7 3Z" />
          </svg>
        </button>
      </div>
    </div>
  );
}

function Composer() {
  return (
    <footer className="h-[166px] bg-[radial-gradient(ellipse_at_55%_100%,#1c1e20_0%,#16171a_30%,#121312_60%,#101010_100%)] pt-[18px]">
      <div className="flex h-[63px] items-center pr-[34px] pl-[26px]">
        <button type="button" aria-label="Attach">
          <svg className="size-[42px]" viewBox="0 0 42 42" stroke="#fff" strokeWidth="4" strokeLinecap="round">
            <path d="M21 2V40M2 21H40" />
          </svg>
        </button>
        <div className="ml-[27px] flex h-[63px] min-w-0 flex-1 items-center rounded-full border border-[#363737] bg-[#2c2d2e] pr-[22px] pl-6">
          <input type="text" aria-label="Message" className="min-w-0 flex-1 bg-transparent text-[32px] text-white outline-none" />
          <button type="button" aria-label="Stickers">
            <svg className="size-[38px]" viewBox="0 0 38 38" fill="none" stroke="#fff" strokeWidth="2.500" strokeLinejoin="round">
              <path d="M13 1.500H25Q36.500 1.500 36.500 13V18Q36.500 24 30 30Q24 36.500 17 36.500H13Q1.500 36.500 1.500 25V13Q1.500 1.500 13 1.500ZM36 20Q36 22 31 22Q21 21 21 31Q21 35 20 36" />
            </svg>
          </button>
        </div>
        <button type="button" className="ml-[37px]" aria-label="Camera">
          <svg className="h-[38px] w-12" viewBox="0 0 48 38" fill="none" stroke="#fff" strokeWidth="2.500" strokeLinejoin="round">
            <path d="M5 6H13Q15 6 16 4Q17 2 19 2H29Q31 2 32 4Q33 6 35 6H43Q46.500 6 46.500 10V33Q46.500 36 44 36H5Q1.500 36 1.500 33V10Q1.500 6 5 6Z" />
            <circle cx="24" cy="21" r="10" />
            <circle cx="37.500" cy="13.500" r="1.500" fill="#fff" />
          </svg>
        </button>
        <button type="button" className="ml-[38px]" aria-label="Voice message">
          <svg className="h-[47px] w-[34px]" viewBox="0 0 34 47" fill="none" stroke="#fff" strokeWidth="3" strokeLinecap="round">
            <rect x="9" y="2" width="16" height="30" rx="8" />
            <path d="M2 24Q3 39 17 39Q31 39 32 24M17 39V45" />
          </svg>
        </button>
      </div>
    </footer>
  );
}

export default function App() {
  return (
    <div className="flex min-h-screen flex-col bg-[#121212] font-['Inter',sans-serif] text-white">
      <header className="h-[199px] bg-[#121212]">
        <StatusBar />
        <ChatHeader />
      </header>

      <main className="relative flex-1 overflow-hidden bg-[#090909]">
        <Wallpaper />
        <div className="relative flex flex-col gap-[9px] px-[34px] pt-[11px] text-[32px] leading-[45px] text-[#fafafa]">
          <Bubble tone="out" time="12.10" width="w-[467px]">
            <p>Selamat Pagi Bapak Jauhari</p>
          </Bubble>
          <Bubble tone="out" time="12.10" width="w-[575px]" inlineTime>
            <p>
              Izin saya Fauzyah Dari Noesantara
              <br />
              Gardapati
            </p>
          </Bubble>
          <Bubble tone="out" time="12.10" width="w-[537px]">
            <p>
              Infonya bapak mau mengajukan
              <br />
              pengajuan restruck ya pak?
            </p>
          </Bubble>
          <Bubble tone="out" time="12.11" width="w-[516px]" inlineTime>
            <p>Boleh dibantu Persyaratannya.</p>
            <ol className="mt-2 list-inside list-decimal">
              <li>KTP</li>
              <li>KK</li>
              <li>SLIP Gaji</li>
            </ol>
          </Bubble>
          <Bubble tone="out" time="12.11" width="w-[559px]" inlineTime>
            <p>
              Mohon bantu kirimkan ke saya ya
              <br />
              pak
            </p>
          </Bubble>

          <div className="mt-[19px] mr-[5px] self-end">
            <PrayingHands id="light" skin="#f6e0c2" shade="#dba983" line="#a8663f" label="Folded hands, light skin tone" />
          </div>
          <div className="flex h-[52px] items-center self-end rounded-[18px] bg-[#264c39] pr-[18px] pl-[21px]">
            <Meta tone="out" time="12.11" />
          </div>

          <div className="mt-[29px] flex flex-col gap-[10px]">
            <Bubble tone="in" time="12.17" width="w-[247px]">
              <p>Baik bu</p>
            </Bubble>
            <Bubble tone="in" time="12.20" width="w-[365px]">
              <p>Sebentar ya bu</p>
            </Bubble>
          </div>

          <div className="mt-[19px] ml-[3px] self-start">
            <PrayingHands id="gold" skin="#fad56b" shade="#dd962c" line="#9a5a12" label="Folded hands" />
          </div>
          <div className="flex h-[50px] items-center self-start rounded-[18px] bg-[#242625] px-5">
            <Meta tone="in" time="12.20" />
          </div>

          {/* top edge of the next message's photos */}
          <div className="mt-[10px] h-[13px] overflow-hidden">
            <div className="flex h-[200px] w-[585px] gap-[10px] rounded-[24px] bg-[#242625] p-[7px]">
              <div className="flex-1 rounded-[18px] bg-black" />
              <div className="flex-1 rounded-[18px] bg-linear-to-r from-[#332d2c] via-[#544c4b] to-[#3a302b]" />
            </div>
          </div>
        </div>

        <div className="absolute top-[286px] right-[6px] h-[510px] w-[6px] rounded-full bg-[#717171]" aria-hidden="true" />
        <button type="button" className="absolute right-[18px] bottom-12 flex size-[66px] items-center justify-center rounded-full bg-[#242625]" aria-label="Scroll to latest">
          <svg className="h-4 w-7" viewBox="0 0 28 16" fill="none" stroke="#fff" strokeWidth="4" strokeLinecap="round" strokeLinejoin="round">
            <path d="M3 3L14 13L25 3" />
          </svg>
        </button>
      </main>

      <Composer />
    </div>
  );
}
